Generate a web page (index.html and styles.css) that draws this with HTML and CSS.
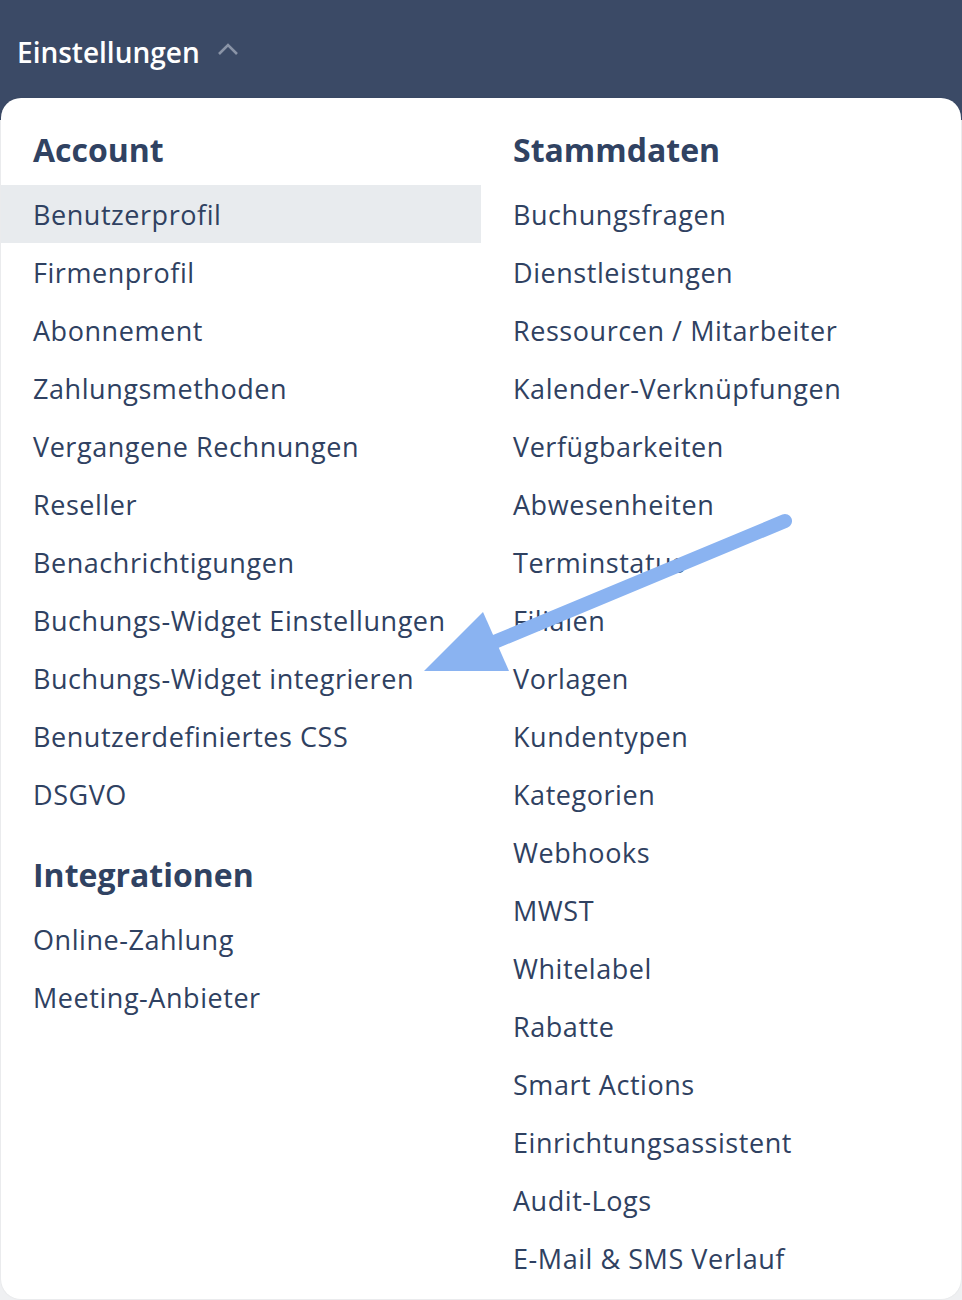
FILE: index.html
```html
<!DOCTYPE html>
<html lang="de">
<head>
<meta charset="utf-8">
<title>Einstellungen</title>
<link rel="stylesheet" href="styles.css">
</head>
<body>
<header class="topbar">
  <div class="topbar-title">
    <span>Einstellungen</span>
    <svg class="chevron" width="22" height="14" viewBox="0 0 22 14"><path d="M2 12 L11 3 L20 12" fill="none" stroke="#8a94a7" stroke-width="2.6"/></svg>
  </div>
</header>
<main class="panel">
  <section class="col">
    <h2 class="col-heading">Account</h2>
    <a class="item active">Benutzerprofil</a>
    <a class="item">Firmenprofil</a>
    <a class="item">Abonnement</a>
    <a class="item">Zahlungsmethoden</a>
    <a class="item">Vergangene Rechnungen</a>
    <a class="item">Reseller</a>
    <a class="item">Benachrichtigungen</a>
    <a class="item">Buchungs-Widget Einstellungen</a>
    <a class="item">Buchungs-Widget integrieren</a>
    <a class="item">Benutzerdefiniertes CSS</a>
    <a class="item">DSGVO</a>
    <h2 class="col-heading">Integrationen</h2>
    <a class="item">Online-Zahlung</a>
    <a class="item">Meeting-Anbieter</a>
  </section>
  <section class="col">
    <h2 class="col-heading">Stammdaten</h2>
    <a class="item">Buchungsfragen</a>
    <a class="item">Dienstleistungen</a>
    <a class="item">Ressourcen / Mitarbeiter</a>
    <a class="item">Kalender-Verknüpfungen</a>
    <a class="item">Verfügbarkeiten</a>
    <a class="item">Abwesenheiten</a>
    <a class="item">Terminstatus</a>
    <a class="item">Filialen</a>
    <a class="item">Vorlagen</a>
    <a class="item">Kundentypen</a>
    <a class="item">Kategorien</a>
    <a class="item">Webhooks</a>
    <a class="item">MWST</a>
    <a class="item">Whitelabel</a>
    <a class="item">Rabatte</a>
    <a class="item">Smart Actions</a>
    <a class="item">Einrichtungsassistent</a>
    <a class="item">Audit-Logs</a>
    <a class="item">E-Mail &amp; SMS Verlauf</a>
  </section>
</main>
<svg class="annotation" width="962" height="1300" viewBox="0 0 962 1300">
  <line x1="785" y1="521" x2="492" y2="643" stroke="#8ab3f1" stroke-width="14" stroke-linecap="round"/>
  <polygon points="483,612 424,671 509,671" fill="#8ab3f1"/>
</svg>
</body>
</html>
```
FILE: styles.css
```css
* { box-sizing: border-box; }
html, body { margin: 0; padding: 0; }
body {
  position: relative;
  background: #eff0f2;
  font-family: "Open Sans", "Liberation Sans", sans-serif;
  color: #2f4161;
  height: 1300px;
  overflow: hidden;
}
.topbar {
  height: 120px;
  background: #3b4a66;
  padding: 34px 0 0 17px;
}
.topbar-title {
  display: flex;
  align-items: center;
  gap: 17px;
  color: #ffffff;
  font-size: 28px;
  font-weight: 600;
  line-height: 36px;
}
.chevron { margin-top: -6px; }
.panel {
  margin: -22px 0 0 1px;
  width: 960px;
  background: #ffffff;
  border-radius: 20px;
  display: grid;
  grid-template-columns: 480px 480px;
  padding-bottom: 12px;
  box-shadow: 0 0 2px rgba(0,0,0,0.08);
}
.col { display: flex; flex-direction: column; }
.col-heading {
  margin: 0;
  height: 87px;
  padding: 32px 0 0 32px;
  font-size: 32px;
  font-weight: 700;
  line-height: 40px;
  color: #304262;
}
.item {
  display: flex;
  align-items: center;
  height: 58px;
  padding: 2px 0 0 32px;
  font-size: 27px;
  letter-spacing: 0.55px;
  line-height: 34px;
  color: #2f4161;
}
.item.active { background: #e8ebee; }
.annotation {
  position: absolute;
  left: 0;
  top: 0;
  pointer-events: none;
}
```
